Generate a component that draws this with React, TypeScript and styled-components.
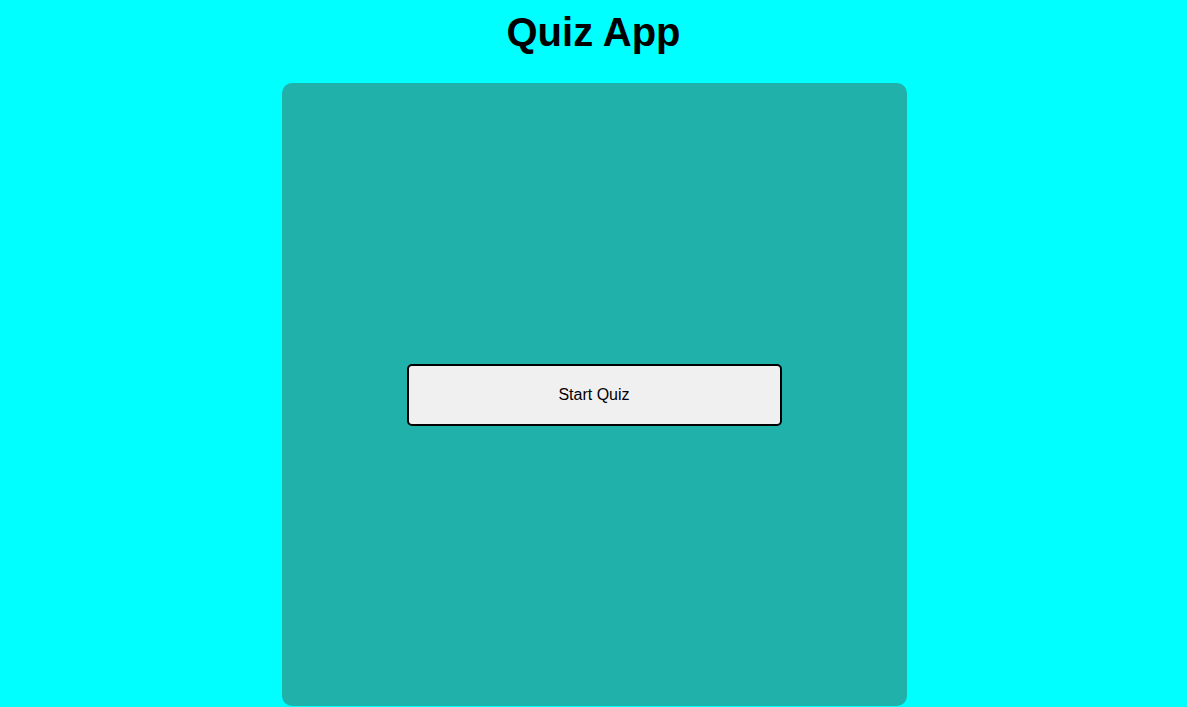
import React from 'react';
import styled, { createGlobalStyle } from 'styled-components';

const GlobalStyle = createGlobalStyle`
  html, body {
    margin: 0;
    padding: 0;
    background: #00ffff;
    font-family: 'Liberation Sans', Arial, sans-serif;
  }
`;

const Page = styled.div`
  display: flex;
  flex-direction: column;
  align-items: center;
  padding-top: 9px;
`;

const Title = styled.h1`
  margin: 0;
  font-size: 40px;
  font-weight: 700;
  line-height: 46px;
  color: #000;
`;

const Card = styled.div`
  margin-top: 28px;
  margin-left: 1px;
  width: 625px;
  height: 623px;
  background: #20b2aa;
  border-radius: 10px;
  display: flex;
  align-items: center;
  justify-content: center;
`;

const StartButton = styled.button`
  width: 375px;
  height: 62px;
  margin-top: 1px;
  background: #f0f0f0;
  border: 2px solid #000;
  border-radius: 5px;
  font-family: 'Liberation Sans', Arial, sans-serif;
  font-size: 16px;
  color: #000;
  cursor: pointer;
`;

const App: React.FC = () => {
  return (
    <>
      <GlobalStyle />
      <Page>
        <Title>Quiz App</Title>
        <Card>
          <StartButton>Start Quiz</StartButton>
        </Card>
      </Page>
    </>
  );
};

export default App;
